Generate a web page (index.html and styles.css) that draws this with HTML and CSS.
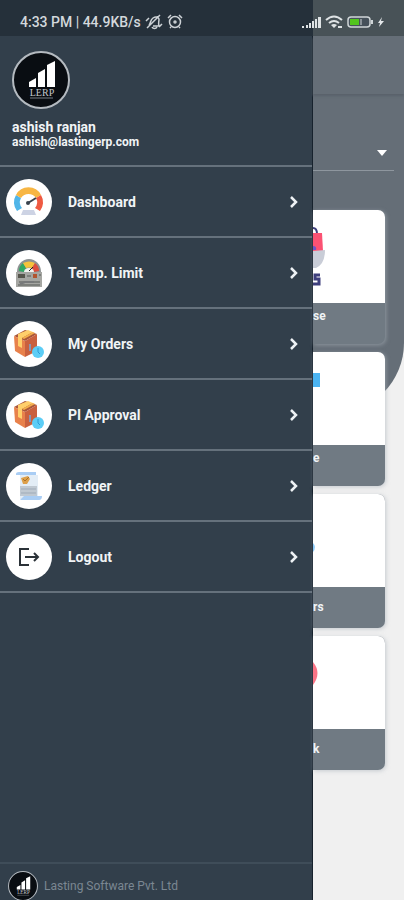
FILE: index.html
```html
<!DOCTYPE html>
<html lang="en">
<head>
  <meta charset="UTF-8" />
  <meta name="viewport" content="width=device-width, initial-scale=1.0"/>
  <title>Lasting ERP</title>
  <link rel="stylesheet" href="styles.css">
</head>
<body>
  <!-- shared drawings -->
  <svg class="defs" aria-hidden="true">
    <symbol id="logo" viewBox="0 0 58 58">
      <circle cx="29" cy="29" r="28" fill="#090d12" stroke="#b4bac0" stroke-width="2"/>
      <path d="M17 31l7-4v9h-7zM26 22l7-4v18h-7zM35 14l8-4v26h-8z" fill="#fff"/>
      <text x="30" y="45" text-anchor="middle" font-family="Liberation Serif, serif" font-size="10" fill="#c4c8cc" font-weight="400">LERP</text>
      <path d="M18 47h23" stroke="#777d83"/>
    </symbol>
    <symbol id="box" viewBox="0 0 46 46">
      <path d="M8 15l11-6 12 4-12 7z" fill="#a9563a"/>
      <path d="M8 15l11 5v16L9 30z" fill="#e8814b"/>
      <path d="M19 20l12-7v17l-12 6z" fill="#c9603e"/>
      <path d="M12 13l10-4 5 2-11 6v10l-4-2z" fill="#ffcf6b"/>
      <path d="M16 17l11-6 2 1-11 6z" fill="#f5b04c"/>
      <path d="M24 23v7" stroke="#8b93b0" stroke-width="2"/>
      <circle cx="32" cy="31" r="6" fill="#5ccdf6"/>
      <path d="M32 27v4l2 2" fill="none" stroke="#2b9bd8" stroke-width="1"/>
    </symbol>
    <symbol id="chevron" viewBox="0 0 12 14">
      <path d="M3 2l5 5-5 5" fill="none" stroke="#eef2f5" stroke-width="2.500"/>
    </symbol>
  </svg>

  <header class="status-bar">
    <span>4:33 PM | 44.9KB/s</span>
    <svg width="18" height="16" viewBox="0 0 18 16" fill="none" stroke="#cdd2d6" stroke-width="1.500">
      <path d="M4 11c2-2 1-5 4-7 3-2 5-1 6 1 0 3-1 4 0 7H8M7 13c1 2 4 2 5 0M2 14L15 1M1 7l3-3M14 13l3-3"/>
    </svg>
    <svg width="16" height="16" viewBox="0 0 16 16" fill="none" stroke="#cdd2d6" stroke-width="1.500">
      <circle cx="8" cy="8" r="5.500"/><path d="M1 4l3-3M15 4l-3-3M4 13l-1 1M12 13l1 1"/>
      <circle cx="8" cy="8" r="1" />
    </svg>
    <div class="status-right">
      <svg width="19" height="13" viewBox="0 0 19 13" fill="#dfe3e5">
        <path d="M0 10h2v2H0zM4 9h2v3H4zM7 7h2v5H7zM10 5h2v7h-2zM13 3h2v9h-2zM16 1h3v11h-3z"/>
      </svg>
      <svg width="18" height="14" viewBox="0 0 18 14" fill="none" stroke="#dfe3e5" stroke-width="2">
        <path d="M1 5q8-7 16 0M4 8q5-4 10 0"/><path d="M6 10q3-2 6 0l-3 3z" fill="#dfe3e5" stroke="none"/><path d="M13 12h4" />
      </svg>
      <svg width="27" height="14" viewBox="0 0 27 14">
        <rect x="1" y="2" width="22" height="10" rx="3" fill="#46515a" stroke="#cfd5d7" stroke-width="1.500"/>
        <rect x="3" y="4" width="9" height="6" fill="#52c41d"/>
        <path d="M14 4v6" stroke="#cfd5d7"/><path d="M25 5v4" stroke="#cfd5d7" stroke-width="2"/>
      </svg>
      <svg width="6" height="12" viewBox="0 0 6 12"><path d="M4 1L0 7h2l-1 4 5-6H3z" fill="#e4e8ea"/></svg>
    </div>
  </header>

  <div class="screen">
    <aside class="drawer">
      <div class="profile">
        <svg class="avatar"><use href="#logo"/></svg>
        <div class="name">ashish ranjan</div>
        <div class="email">ashish@lastingerp.com</div>
      </div>

      <nav class="menu">
        <a href="#dashboard">
          <svg class="icon" viewBox="0 0 46 46">
            <path d="M11 32A14 14 0 0 1 10 16l5 3a9 9 0 0 0 1 10z" fill="#50b5e8"/>
            <path d="M10 16a14 14 0 0 1 25 0l-5 3a9 9 0 0 0-15 0z" fill="#f7b644"/>
            <path d="M35 16a14 14 0 0 1-1 16l-5-3a9 9 0 0 0 1-10z" fill="#ef5a42"/>
            <path d="M22 24l8-5" stroke="#39434d" stroke-width="2"/>
            <circle cx="22" cy="24" r="2" fill="#39434d"/>
            <path d="M17 31h11l2 5H15z" fill="#cdd3e4"/>
          </svg>
          <span>Dashboard</span>
          <svg class="chevron"><use href="#chevron"/></svg>
        </a>
        <a href="#temp-limit">
          <svg class="icon" viewBox="0 0 46 46">
            <path d="M11 22a12 13 0 0 1 24 0z" fill="#8d9292"/>
            <path d="M13 21a10 10 0 0 1 4-8l3 5-2 4z" fill="#31a864"/>
            <path d="M17 13q6-3 12 0l-3 5q-3-1-6 0z" fill="#f5c33b"/>
            <path d="M29 13a10 10 0 0 1 4 8l-5 1-2-4z" fill="#dd4d3d"/>
            <path d="M18 22a5 4 0 0 1 10 0z" fill="#f2f2ef"/>
            <path d="M23 21l4-4" stroke="#222"/>
            <rect x="10" y="22" width="26" height="15" fill="#a5a6a2"/>
            <path d="M12 24h7v4h-7z" fill="#55554c"/><path d="M27 24h4v4h-4z" fill="#b1542f"/>
            <path d="M21 26h4M33 25h2M12 35h22M13 32h6M27 32h7" stroke="#555854" stroke-width="1"/>
            <path d="M14 34l5-2h9" fill="none" stroke="#77797a" stroke-width="2"/>
          </svg>
          <span>Temp. Limit</span>
          <svg class="chevron"><use href="#chevron"/></svg>
        </a>
        <a href="#my-orders">
          <svg class="icon"><use href="#box"/></svg>
          <span>My Orders</span>
          <svg class="chevron"><use href="#chevron"/></svg>
        </a>
        <a href="#pi-approval">
          <svg class="icon"><use href="#box"/></svg>
          <span>PI Approval</span>
          <svg class="chevron"><use href="#chevron"/></svg>
        </a>
        <a href="#ledger">
          <svg class="icon" viewBox="0 0 46 46">
            <path d="M14 12h18v24H14z" fill="#e3edf6"/>
            <path d="M10 11q0-2 3-2h17v3H10zM18 33h18q0 4-3 4H14z" fill="#a9cdf4"/>
            <path d="M14 23h17v10H14z" fill="#c0c9d2"/>
            <path d="M15 26h15M15 30h15" stroke="#9fabb8"/>
            <path d="M15 15l7-2 2 3-3 5h-4z" fill="#dda04a"/>
            <path d="M17 16l2 2 4-4" fill="none" stroke="#a97027"/>
          </svg>
          <span>Ledger</span>
          <svg class="chevron"><use href="#chevron"/></svg>
        </a>
        <a href="#logout">
          <svg class="icon" viewBox="0 0 46 46" fill="none" stroke="#2b3238" stroke-width="2">
            <path d="M23 15h-9v16h9M19 23h13M28 19l4 4-4 4"/>
          </svg>
          <span>Logout</span>
          <svg class="chevron"><use href="#chevron"/></svg>
        </a>
      </nav>

      <footer class="credit">
        <svg class="credit-logo"><use href="#logo"/></svg>
        <span>Lasting Software Pvt. Ltd</span>
      </footer>
    </aside>

    <main class="page">
      <div class="app-bar"></div>
      <div class="filter">
        <select aria-label="Filter"></select>
        <svg width="10" height="6" viewBox="0 0 10 6"><path d="M0 0h10L5 6z" fill="#fff"/></svg>
      </div>
      <div class="cards">
        <a class="card" href="#purchase">
          <svg class="art" viewBox="0 0 40 93" preserveAspectRatio="xMinYMin meet">
            <path d="M0 18q4 0 4 6" fill="none" stroke="#3e3f7d" stroke-width="2"/>
            <path d="M0 23h9l1 18H0z" fill="#fb5273"/>
            <path d="M0 36q4 0 3 4H0z" fill="#6b55c8"/>
            <path d="M0 41l12-1q0 14-9 18H0z" fill="#c9cdd7"/>
            <path d="M7 65H2v4h4v5H0" fill="none" stroke="#3e3f7d" stroke-width="3"/>
          </svg>
          <span>se</span>
        </a>
        <a class="card" href="#invoice">
          <svg class="art" viewBox="0 0 40 93" preserveAspectRatio="xMinYMin meet"><path d="M0 21h7v14H0z" fill="#4bb4f2"/></svg>
          <span>e</span>
        </a>
        <a class="card single" href="#orders">
          <svg class="art" viewBox="0 0 40 93" preserveAspectRatio="xMinYMin meet"><path d="M0 49q4 4 0 9z" fill="#8ccbfa"/></svg>
          <span>rs</span>
        </a>
        <a class="card single" href="#stock">
          <svg class="art" viewBox="0 0 40 93" preserveAspectRatio="xMinYMin meet"><path d="M0 26q9 11 0 23z" fill="#fa7486"/></svg>
          <span>k</span>
        </a>
      </div>
    </main>
  </div>
</body>
</html>
```
FILE: styles.css
```css
* {
  box-sizing: border-box;
}

body {
  margin: 0;
  min-height: 100vh;
  display: flex;
  flex-direction: column;
  font-family: Roboto, "Liberation Sans", sans-serif;
  background: #f0f0f0;
}

a {
  color: inherit;
  text-decoration: none;
}

svg {
  flex: none;
}

.defs {
  display: none;
}

/* status bar */
.status-bar {
  height: 36px;
  padding: 8px 20px 0;
  display: flex;
  align-items: center;
  gap: 4px;
  font-size: 14px;
  font-weight: 500;
  color: #d3d8dc;
  background: linear-gradient(to right, #25303a 77.5%, #485257 77.5%);
}

.status-right {
  margin-left: auto;
  display: flex;
  align-items: center;
  gap: 4px;
}

.screen {
  flex: 1;
  display: grid;
  grid-template-columns: 77.5% 1fr;
}

/* drawer */
.drawer {
  display: flex;
  flex-direction: column;
  background: #323f4b;
  border-right: 1px solid #17222d;
  color: #f1f4f6;
}

.profile {
  height: 131px;
  padding: 15px 12px 0;
  border-bottom: 2px solid #65717c;
  font-weight: 700;
}

.avatar {
  display: block;
  width: 58px;
  height: 58px;
  margin-bottom: 10px;
}

.name {
  font-size: 14px;
  line-height: 16px;
}

.email {
  font-size: 12px;
  line-height: 14px;
}

.menu a {
  display: flex;
  align-items: center;
  height: 71px;
  padding: 0 12px 0 6px;
  border-bottom: 2px solid #65717c;
  font-size: 14px;
  font-weight: 700;
}

.menu span {
  flex: 1;
}

.icon {
  width: 46px;
  height: 46px;
  margin-right: 16px;
  border-radius: 50%;
  background: #fff;
}

.chevron {
  width: 12px;
  height: 14px;
}

.credit {
  display: flex;
  align-items: center;
  gap: 6px;
  height: 38px;
  margin-top: auto;
  padding: 8px 8px 0;
  border-top: 2px solid #3f4d59;
  font-size: 12px;
  color: #7b8792;
}

.credit-logo {
  width: 30px;
  height: 30px;
}

/* page behind the drawer */
.page {
  position: relative;
  z-index: 0;
  min-width: 0;
}

.page::before {
  content: "";
  position: absolute;
  z-index: -1;
  top: 0;
  left: 0;
  right: 0;
  height: 377px;
  background: #656e77;
  border-bottom-right-radius: 70px;
}

.app-bar {
  height: 58px;
  box-shadow: 0 2px 2px #59626b;
}

.filter {
  display: flex;
  align-items: flex-end;
  height: 77px;
  margin-right: 10px;
  padding: 0 7px 14px 0;
  border-bottom: 1px solid #8e969e;
}

.filter select {
  flex: 1;
  min-width: 0;
  height: 24px;
  margin-bottom: -9px;
  appearance: none;
  border: none;
  background: none;
  color: #fff;
}

.cards {
  display: flex;
  flex-direction: column;
  gap: 8px;
  padding: 39px 19px 20px 0;
}

.card {
  height: 134px;
  overflow: hidden;
  border-radius: 0 7px 7px 0;
  background: #707a83;
  box-shadow: 1px 1px 4px rgba(170, 178, 186, 0.6);
}

.art {
  display: block;
  width: 100%;
  height: 93px;
  background: #fff;
}

.card span {
  display: block;
  padding-top: 5px;
  font-size: 12px;
  line-height: 16px;
  font-weight: 700;
  color: #f1f4f6;
}

.single span {
  padding-top: 12px;
}
```
